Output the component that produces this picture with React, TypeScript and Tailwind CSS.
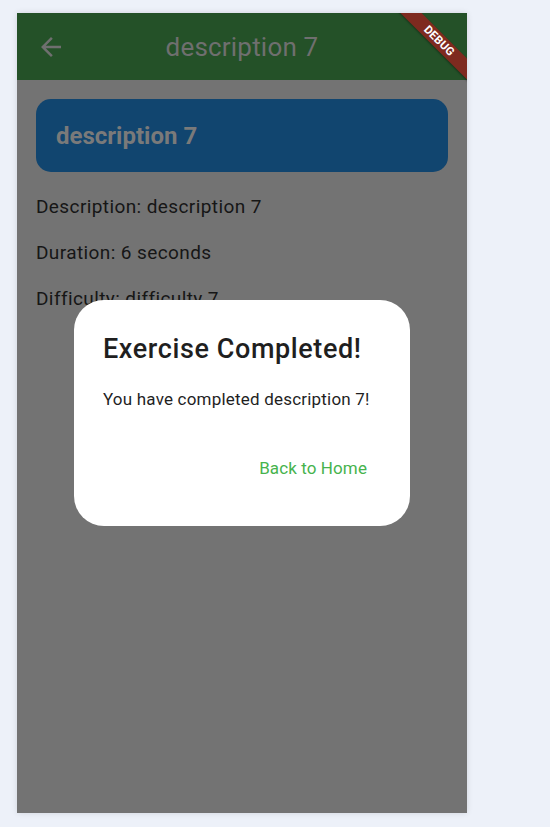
const details = [
  'Description: description 7',
  'Duration: 6 seconds',
  'Difficulty: difficulty 7',
]

function BackArrow() {
  return (
    <svg viewBox="0 0 24 24" className="h-[30px] w-[30px] fill-[#6f6f6f]">
      <path d="M20 11H7.83l5.59-5.59L12 4l-8 8 8 8 1.41-1.41L7.83 13H20v-2z" />
    </svg>
  )
}

function DebugBanner() {
  return (
    <div className="pointer-events-none absolute right-0 top-0 h-[80px] w-[80px] overflow-hidden">
      <div className="absolute left-[52px] top-[28px] flex h-[15px] w-[120px] -translate-x-1/2 -translate-y-1/2 rotate-45 items-center justify-center bg-[#7e2a1f] shadow-[0_1px_2px_rgba(0,0,0,0.35)]">
        <span className="text-[11.5px] font-bold leading-none tracking-[0.2px] text-white">
          DEBUG
        </span>
      </div>
    </div>
  )
}

function CompletedDialog() {
  return (
    <div className="absolute inset-0 flex items-center justify-center">
      <div className="flex h-[226px] w-[336px] flex-col rounded-[30px] bg-white pl-[29px] pr-[24px] pt-[34px]">
        <h2 className="whitespace-nowrap text-[27px] font-medium leading-[30px] tracking-[0.6px] text-[#1f1f1f]">
          Exercise Completed!
        </h2>
        <p className="mt-[24px] whitespace-nowrap text-[17px] leading-[22px] tracking-[0.2px] text-[#1f1f1f]">
          You have completed description 7!
        </p>
        <div className="mt-[47px] flex justify-end pr-[19px]">
          <button className="whitespace-nowrap text-[17px] leading-[22px] tracking-[0.1px] text-[#46b34d]">
            Back to Home
          </button>
        </div>
      </div>
    </div>
  )
}

export default function App() {
  return (
    <div className="min-h-[827px] bg-[#edf1f9] pl-[17px] pt-[13px] font-['Roboto',sans-serif]">
      <div className="relative h-[800px] w-[450px] overflow-hidden bg-[#737373] shadow-[0_0_6px_rgba(0,0,0,0.12)]">
        <header className="relative flex h-[67px] items-center bg-[#245128] pl-[19px]">
          <BackArrow />
          <h1 className="absolute inset-x-0 text-center text-[26px] leading-[30px] tracking-[0.2px] text-[#6f6f6f]">
            description 7
          </h1>
        </header>
        <main className="px-[19px] pt-[19px]">
          <div className="flex h-[73px] items-center rounded-[15px] bg-[#11456f] px-[20px]">
            <span className="text-[24px] font-bold leading-[28px] text-[#7a7a7a]">
              description 7
            </span>
          </div>
          <div className="mt-[24px] flex flex-col gap-[25px]">
            {details.map((line) => (
              <p key={line} className="text-[19px] leading-[21px] tracking-[0.4px] text-[#161616]">
                {line}
              </p>
            ))}
          </div>
        </main>
        <CompletedDialog />
        <DebugBanner />
      </div>
    </div>
  )
}
